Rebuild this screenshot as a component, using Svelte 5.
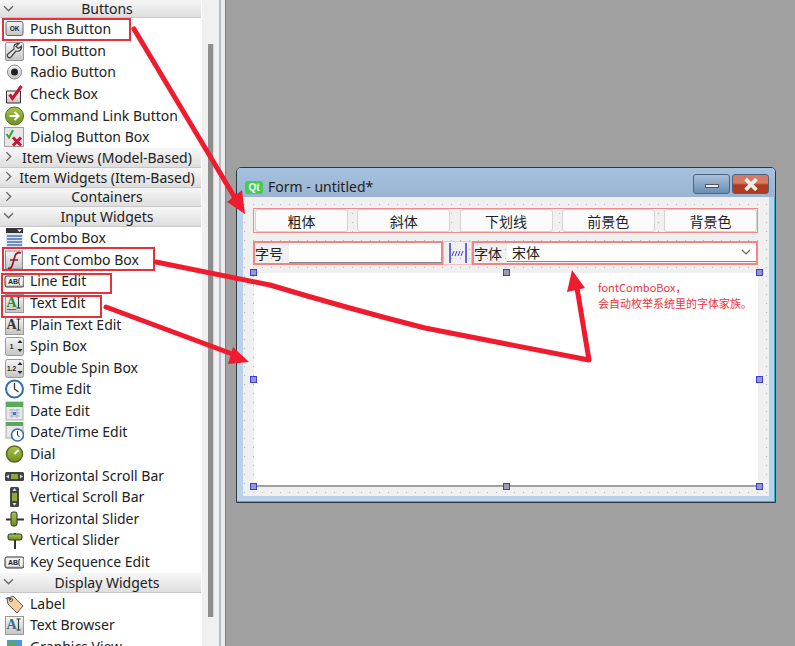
<script>
  const sections = [
    { title: 'Buttons', open: true, h: 18.4, items: [['Push Button','ok'],['Tool Button','tool'],['Radio Button','radio'],['Check Box','check'],['Command Link Button','cmd'],['Dialog Button Box','dialog']] },
    { title: 'Item Views (Model-Based)', open: false, h: 20, items: [] },
    { title: 'Item Widgets (Item-Based)', open: false, h: 20, items: [] },
    { title: 'Containers', open: false, h: 19, items: [] },
    { title: 'Input Widgets', open: true, h: 20.4, items: [['Combo Box','combo'],['Font Combo Box','font'],['Line Edit','line'],['Text Edit','text'],['Plain Text Edit','plain'],['Spin Box','spin'],['Double Spin Box','dspin'],['Time Edit','time'],['Date Edit','date'],['Date/Time Edit','datetime'],['Dial','dial'],['Horizontal Scroll Bar','hscroll'],['Vertical Scroll Bar','vscroll'],['Horizontal Slider','hslider'],['Vertical Slider','vslider'],['Key Sequence Edit','key']] },
    { title: 'Display Widgets', open: true, h: 20, items: [['Label','label'],['Text Browser','browser'],['Graphics View','graphics']] }
  ];
  const buttons = ['粗体', '斜体', '下划线', '前景色', '背景色'];
  const handles = [[-1,-1],[252,-1],[505,-1],[-1,106],[505,106],[-1,213],[252,213],[505,213]];
</script>

{#snippet icon(k)}
  <svg class="ico" viewBox="0 0 20 20" width="20" height="20">
    {#if k === 'ok'}
      <rect x="2" y="2.500" width="17" height="14" rx="2" fill="url(#gb)" stroke="#666"/><text x="10.500" y="12" class="mini" text-anchor="middle">OK</text>
    {:else if k === 'tool'}
      <rect x="1.500" y="1.500" width="18" height="18" rx="1.500" fill="url(#gb)" stroke="#999"/><path d="M15 2.500c-3.500-.5-6 2-5 5.500l-6 5c-2 2 1 5 3 3l5-6c3.500 1 6-1.500 5.500-5l-3 2.500-2.500-2z" fill="#e4e4e4" stroke="#444" stroke-width="1.200"/>
    {:else if k === 'radio'}
      <circle cx="10.500" cy="10" r="7" fill="url(#gb)" stroke="#888"/><circle cx="10.500" cy="10" r="3.500" fill="#222"/>
    {:else if k === 'check'}
      <path d="M2.500 7h14v12h-14z" fill="url(#gb)" stroke="#333"/><path d="M5.500 10.500l3 4 9-12.500" fill="none" stroke="#cc1230" stroke-width="3"/>
    {:else if k === 'cmd'}
      <circle cx="10.500" cy="10" r="9" fill="url(#gg)" stroke="#4f6f16"/><path d="M5.500 10h9M10.500 6l4 4-4 4" fill="none" stroke="#fff" stroke-width="2"/>
    {:else if k === 'dialog'}
      <rect x="0.500" y="0.500" width="19" height="19" fill="#e6e6e6" stroke="#a0a0a0"/><path d="M2.500 7l2.500 3.500 4-7.500" fill="none" stroke="#3aa63a" stroke-width="2"/><path d="M9 10.500l8 8M17 10.500l-8 8" stroke="#cc1230" stroke-width="3"/>
    {:else if k === 'combo'}
      <rect x="2" y="0" width="17" height="20" fill="#dfe6f0"/><rect x="2" y="0" width="17" height="5" fill="#333"/><path d="M3 8h15M3 11h15M3 14h15M3 17h15" stroke="#6f8fc0" stroke-width="2"/><path d="M13 1.500h5l-2.500 2.500z" fill="#fff"/>
    {:else if k === 'font'}
      <rect x="1.500" y="1" width="17" height="18" fill="url(#gb)" stroke="#8a8a8a"/><path d="M4 18c3 1 4-1 5-5l2-7c1-3 3-4 6-3M6 10h8" fill="none" stroke="#8b1a2a" stroke-width="1.700"/>
    {:else if k === 'line' || k === 'key'}
      <rect x="1" y="5" width="19" height="11" rx="2" fill="url(#gb)" stroke="#333"/><rect x="3" y="7" width="15" height="7" fill="#f4f4f4"/><text x="9" y="13" class="mini" text-anchor="middle" style="font-size:7px">AB</text><path d="M15.500 7c-1 2-1 5 0 7" fill="none" stroke="#222"/>
    {:else if k === 'text' || k === 'plain' || k === 'browser'}
      <rect x="1.500" y="1.500" width="18" height="18" fill="url(#gb)" stroke="#999"/><text x="7.500" y="14" class="serif" text-anchor="middle" fill={k === 'text' ? '#2f8a2f' : k === 'browser' ? '#2f6f8a' : '#333'}>A</text>{#if k === 'text'}<path d="M3 16.500h9" stroke="#2f8a2f"/>{/if}<path d="M12.500 4h4M12.500 15h4M14.500 4v11" stroke="#333"/>
    {:else if k === 'spin' || k === 'dspin'}
      <rect x="1.500" y="1.500" width="18" height="18" rx="2" fill="url(#gb)" stroke="#999"/><text x="7.500" y="13" class="mini" text-anchor="middle">{k === 'spin' ? '1' : '1.2'}</text><path d="M13.500 7l2.500-3 2.500 3zM13.500 13l2.500 3 2.500-3z" fill="#222"/>
    {:else if k === 'time'}
      <circle cx="10.500" cy="10" r="8.500" fill="#fff" stroke="#2f6fb5" stroke-width="2"/><path d="M10.500 4v6l4 3" fill="none" stroke="#333" stroke-width="1.300"/>
    {:else if k === 'date'}
      <rect x="2" y="1" width="17" height="18" fill="#e8e8e8" stroke="#aaa"/><rect x="2" y="1" width="17" height="5" fill="#5aa85a"/><path d="M5 9h11M5 12h11M5 15h11M8 8v9M13 8v9" stroke="#9fb3cf"/><rect x="9" y="11" width="3" height="3" fill="#4a78c0"/>
    {:else if k === 'datetime'}
      <rect x="2" y="0" width="17" height="16" fill="#e8e8e8" stroke="#aaa"/><rect x="2" y="0" width="17" height="4" fill="#5aa85a"/><circle cx="13.500" cy="13" r="6" fill="#fff" stroke="#2f6fb5" stroke-width="1.600"/><path d="M13.500 9v4l2 2" fill="none" stroke="#333"/>
    {:else if k === 'dial'}
      <circle cx="10.500" cy="10" r="8" fill="url(#gg)" stroke="#55691c" stroke-width="1.500"/><path d="M10.500 10l4-4" stroke="#fff" stroke-width="2"/>
    {:else if k === 'hscroll'}
      <rect x="1" y="6" width="19" height="9" rx="1.500" fill="#444"/><rect x="7" y="8" width="7" height="5" fill="#8cab36"/><path d="M2 10.500l3-2v4zM19 10.500l-3-2v4z" fill="#ddd"/>
    {:else if k === 'vscroll'}
      <rect x="6" y="0" width="9" height="20" rx="1.500" fill="#444"/><rect x="8" y="6" width="5" height="8" fill="#8cab36"/><path d="M10.500 1l-2 3h4zM10.500 19l-2-3h4z" fill="#ddd"/>
    {:else if k === 'hslider'}
      <path d="M2 10.500h18" stroke="#333" stroke-width="2"/><rect x="7" y="3" width="6" height="14" rx="2" fill="url(#gg)" stroke="#333"/>
    {:else if k === 'vslider'}
      <path d="M11 3v16" stroke="#333" stroke-width="2"/><rect x="4" y="4" width="14" height="6" rx="2" fill="url(#gg)" stroke="#333"/>
    {:else if k === 'label'}
      <path d="M3 5l6-3 10 10-6 7L4 10z" fill="#f4cfa0" stroke="#555"/><circle cx="7" cy="6" r="1.500" fill="#fff" stroke="#555"/><path d="M7 6C5 3 3 3 2 5" fill="none" stroke="#333"/>
    {:else}
      <rect x="3" y="3" width="15" height="15" fill="#4a9ad8"/><circle cx="8" cy="8" r="4" fill="#5aa85a"/>
    {/if}
  </svg>
{/snippet}

<svg class="defs" width="0" height="0">
  <defs>
    <linearGradient id="gb" x1="0" y1="0" x2="0" y2="1"><stop offset="0" stop-color="#f6f6f6"/><stop offset="1" stop-color="#c4c4c4"/></linearGradient>
    <linearGradient id="gg" x1="0" y1="0" x2="0" y2="1"><stop offset="0" stop-color="#a8c44a"/><stop offset="1" stop-color="#6f8f20"/></linearGradient>
  </defs>
</svg>

<div class="page">
  <aside class="box">
    {#each sections as s}
      <div class="head" style="height:{s.h}px">
        <svg class="chev" viewBox="0 0 10 10" width="11" height="11">
          <path d={s.open ? 'M1 3l4 4 4-4' : 'M3 1l4 4-4 4'} fill="none" stroke="#666" stroke-width="1.200"/>
        </svg>
        <span>{s.title}</span>
      </div>
      {#each s.items as it}
        <div class="item">{@render icon(it[1])}<span>{it[0]}</span></div>
      {/each}
    {/each}
  </aside>

  <div class="strip"><div class="thumb"></div></div>

  <main class="canvas">
    <section class="win">
      <header class="title">
        <span class="qt">Qt</span>
        <span class="cap">Form - untitled*</span>
        <span class="wbtn min"><i></i></span>
        <span class="wbtn close">
          <svg viewBox="0 0 16 12" width="18" height="13"><path d="M3 1l10 10M13 1L3 11" stroke="#eee" stroke-width="3.400"/></svg>
        </span>
      </header>
      <div class="form">
        <div class="row1">
          {#each buttons as b}<button>{b}</button>{/each}
        </div>
        <div class="row2">
          <div class="lay left">
            <span class="lbl">字号</span><span class="edit"></span>
          </div>
          <div class="spacer">
            <svg viewBox="0 0 18 20" width="18" height="20"><path d="M1 0v20M17 0v20" stroke="#3a3ae0" stroke-width="1.500"/><path d="M3 13l2-5M6 13l2-5M9 13l2-5M12 13l2-5" stroke="#3a3ae0"/></svg>
          </div>
          <div class="lay right">
            <span class="lbl">字体</span>
            <span class="combo">宋体
              <svg viewBox="0 0 10 6" width="10" height="6"><path d="M1 1l4 4 4-4" fill="none" stroke="#666" stroke-width="1.200"/></svg>
            </span>
          </div>
        </div>
        <div class="editor">
          {#each handles as h}<b class="hd" style="left:{h[0] - 3}px;top:{h[1] - 3}px"></b>{/each}
        </div>
      </div>
    </section>
    <p class="note">fontComboBox，<br />会自动枚举系统里的字体家族。</p>
  </main>

  <div class="mark" style="left:2px;top:18px;width:125px;height:19px"></div>
  <div class="mark" style="left:2px;top:247px;width:149px;height:20px"></div>
  <div class="mark" style="left:1px;top:273px;width:107px;height:17px"></div>
  <div class="mark" style="left:1px;top:295px;width:97px;height:19px"></div>

  <svg class="arrows" viewBox="0 0 795 646" width="795" height="646">
    <g fill="none" stroke="#ee1c2e" stroke-width="5" stroke-linecap="round" stroke-linejoin="round">
      <path d="M134 29L235 198"/>
      <path d="M156 262L270 285Q350 309 425 328L589 360L577 288"/>
      <path d="M106 307L235 355"/>
    </g>
    <g fill="#ee1c2e">
      <path d="M245 214L227 202L242 190z"/>
      <path d="M249 362L233 347L228 364z"/>
      <path d="M572 270L567 292L585 288z"/>
    </g>
  </svg>
</div>

<style>
  :global(body) { margin: 0; }
  .defs { position: absolute; }
  .page {
    position: relative;
    display: flex;
    width: 795px;
    height: 646px;
    overflow: hidden;
    font-family: "Noto Sans", "Noto Sans CJK SC", sans-serif;
    color: #222;
  }
  .box { width: 201px; height: 646px; flex: none; background: #fff; overflow: hidden; }
  .head {
    display: flex;
    align-items: center;
    justify-content: center;
    position: relative;
    box-sizing: border-box;
    padding-left: 13px;
    font-size: 14px;
    line-height: 1;
    background: linear-gradient(#f6f6f6, #dedede);
    border-bottom: 1px solid #c8c8c8;
    border-top: 1px solid #f4f4f4;
  }
  .chev { position: absolute; left: 3px; top: 2px; }
  .item { display: flex; align-items: center; height: 21.600px; font-size: 14px; line-height: 1; }
  .ico { width: 20px; height: 20px; margin: 0 6px 0 4px; flex: none; }
  .mini { font: 700 6.500px "Liberation Sans", sans-serif; fill: #222; }
  .serif { font: 700 14px "Liberation Serif", serif; }
  .strip {
    width: 24px;
    flex: none;
    box-sizing: border-box;
    background: linear-gradient(90deg, #fff 1px, #f0f0f0 1px, #f0f0f0 18px, #b4bac8 18px, #b4bac8 20px, #ececec 20px);
  }
  .thumb { width: 5px; margin: 44px 0 0 7px; height: 573px; background: #8e8e8e; border-right: 1px solid #d4d4d4; }
  .canvas { flex: 1; position: relative; background: #a0a0a0; border-left: 1px solid #7e7e7e; }
  .win {
    position: absolute;
    left: 10px;
    top: 167px;
    width: 540px;
    height: 336px;
    box-sizing: border-box;
    border: 1px solid #2c3a40;
    border-radius: 5px 5px 0 0;
    background: #b9d1ea;
    box-shadow: inset -1px -1px 0 #2fb4d4;
    padding: 0 6px 6px 6px;
    display: flex;
    flex-direction: column;
  }
  .title {
    height: 29px;
    flex: none;
    margin: 0 -6px;
    padding: 6px 6px 0 8px;
    box-sizing: border-box;
    display: flex;
    align-items: flex-start;
    gap: 5px;
    background: linear-gradient(#a6c1de, #9ab4d2);
    border-radius: 4px 4px 0 0;
  }
  .qt {
    width: 18px; height: 13px; margin-top: 7px; border-radius: 3px; background: #41cd52; color: #fff;
    font: 700 10px/13px "Liberation Sans", sans-serif; text-align: center;
  }
  .cap { flex: 1; font-size: 14px; line-height: 18px; margin-top: 4px; color: #222; }
  .wbtn { width: 37px; height: 20px; box-sizing: border-box; border: 1px solid #51637a; border-radius: 3px; display: flex; align-items: center; justify-content: center; }
  .min { background: linear-gradient(#a8c0da, #6d8eb3); margin-right: -3px; }
  .min i { width: 14px; height: 4px; background: #eee; border: 1px solid #555; box-sizing: border-box; margin-top: 3px; }
  .close { background: linear-gradient(#d57a66 0 45%, #b23a20 55%); }
  .form {
    flex: 1;
    position: relative;
    background-color: #f0f0f0;
    background-image: radial-gradient(circle, #b8b8b8 0.7px, transparent 0.8px);
    background-size: 9px 9px;
    background-position: 6px 3px;
    padding: 11px 11px 0 11px;
  }
  .row1 {
    height: 25px;
    margin-left: -1px;
    box-sizing: border-box;
    border: 1px solid #f08a8a;
    display: flex;
    justify-content: space-between;
    align-items: center;
    padding: 0 0 0 1px;
  }
  button {
    width: 93px;
    height: 23px;
    padding: 0;
    font: 14px "Noto Sans CJK SC", sans-serif;
    color: #222;
    background: #fbfbfb;
    border: 1px solid #d4d4d4;
    border-radius: 3px;
  }
  .row2 { display: flex; height: 24px; margin-top: 8px; margin-left: -1px; font-size: 14px; }
  .lay { box-sizing: border-box; border: 2px solid #f48484; display: flex; align-items: flex-start; line-height: 20px; }
  .left { width: 190px; }
  .lbl { width: 28px; flex: none; font-family: "Noto Sans CJK SC", sans-serif; }
  .edit { flex: 1; height: 20px; margin-left: 6px; background: #fff; border-bottom: 1px solid #888; box-sizing: border-box; }
  .spacer { width: 29px; box-sizing: border-box; border: 1px solid #f4c0c0; display: flex; align-items: center; justify-content: center; }
  .right { flex: 1; }
  .combo {
    flex: 1; height: 19px; margin-left: 5px; background: #fff; border-bottom: 1px solid #888; box-sizing: border-box;
    display: flex; align-items: center; justify-content: space-between; padding: 0 5px;
    font-family: "Noto Sans CJK SC", sans-serif; line-height: 1;
  }
  .editor {
    position: relative;
    height: 214px;
    box-sizing: border-box;
    margin-top: 8px;
    background: #fff;
    border-bottom: 2px solid #a0a0a0;
  }
  .hd { position: absolute; width: 5px; height: 5px; background: #9a9ab8; border: 1px solid #3a3ae8; }
  .note {
    position: absolute;
    left: 372px;
    top: 279px;
    margin: 0;
    font: 11px/16px "Noto Sans CJK SC", sans-serif;
    color: #ee3340;
  }
  .mark { position: absolute; border: 2px solid #e8303c; }
  .arrows { position: absolute; left: 0; top: 0; pointer-events: none; }
</style>
